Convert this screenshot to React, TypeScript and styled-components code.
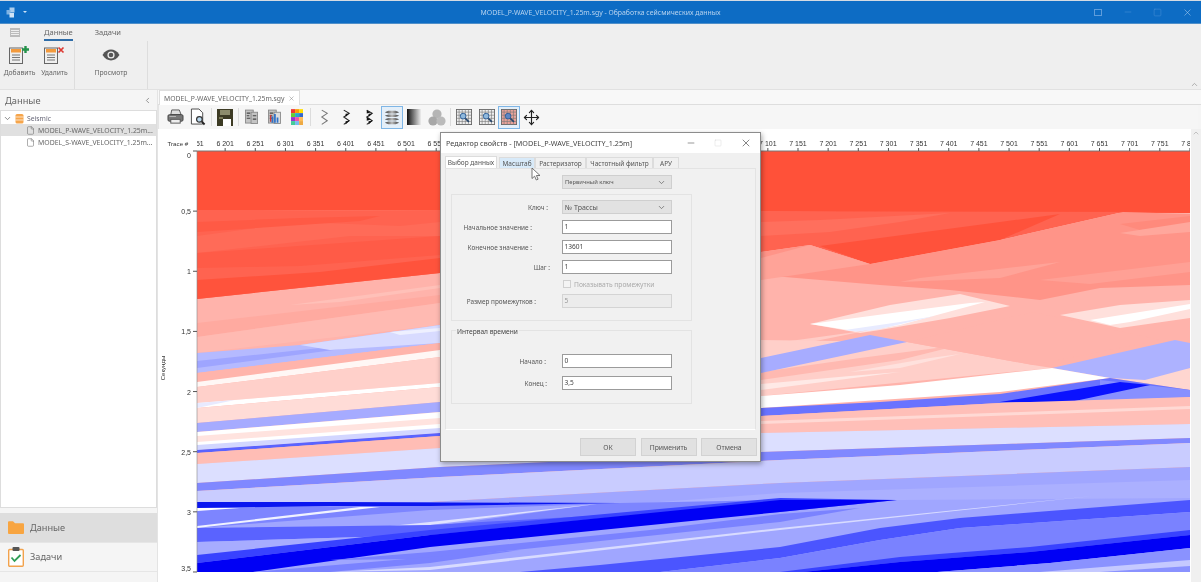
import styled, { createGlobalStyle } from "styled-components";
import { ChevronDown, ChevronLeft, ChevronUp, File, Minus, Move, Square, X } from "lucide-react";

const GlobalStyle = createGlobalStyle`
  html, body { margin: 0; padding: 0; background: #fff; overflow: hidden; }
  * { box-sizing: border-box; }
`;

const STEP_X = 30.15;
const STEP_Y = 60.14;

// painter's order, page coordinates
const layers: [string, string][] = [
  ["#ffb3ab", "197,151 1190,151 1190,572 197,572"],
  ["#ff5139", "197,151 1190,151 1190,213 197,210"],
  ["#ff6350", "197,210 1190,212 1123,212 1000,240 870,264 810,245 761,252 440,273 197,299"],
  ["#ff6b58", "197,236 300,222 400,226 440,222 440,236 350,236 197,253"],
  ["#ff5a45", "197,222 300,218 380,216 360,221 197,232"],
  ["#ff5b47", "197,253 440,236 440,255 300,266 197,268"],
  ["#ff533c", "197,280 320,272 440,258 440,273 197,299"],
  ["#ff6f5d", "761,222 820,220 950,213 900,222 830,232 761,236"],
  ["#ff523b", "820,246 1000,222 1060,214 1000,240 870,264"],
  ["#ff9488", "810,245 870,264 1000,240 1123,212 1190,214 1190,285 1100,288 1040,300 950,290 880,285 761,275 761,252"],
  ["#ff8a7c", "1120,224 1190,216 1190,224 1140,230"],
  ["#ffa79c", "1120,233 1190,222 1190,232 1140,236"],
  ["#ffa398", "920,278 1060,262 1000,278 900,282"],
  ["#ffa398", "761,258 810,245 870,264 761,280"],
  ["#ffa095", "1040,280 1190,262 1190,272 1090,284"],
  ["#ffaaa0", "197,323 440,295 440,303 197,337"],
  ["#ffbab2", "197,337 440,303 440,325 197,353"],
  ["#ffc0b8", "290,305 440,285 440,288 340,302"],
  ["#b5baff", "197,353 300,345 440,325 440,343 197,373"],
  ["#9ea5ff", "197,361 320,348 440,331 440,336 197,368"],
  ["#d8dbff", "300,345 440,325 440,343 330,350"],
  ["#eef0ff", "390,332 440,328 440,331 400,335"],
  ["#ffb4ab", "197,373 440,343 440,350 197,382"],
  ["#fff7f5", "197,382 440,350 440,357 197,387"],
  ["#ffd0ca", "197,387 440,357 440,383 197,403"],
  ["#ffffff", "197,403 440,383 440,387 197,408"],
  ["#e8eaff", "197,403 235,400 197,408"],
  ["#ffdcd7", "197,408 440,387 440,402 197,423"],
  ["#a6abff", "197,423 440,402 440,412 197,432"],
  ["#ffffff", "197,432 440,412 440,433 197,450"],
  ["#ffe3df", "197,436 440,418 440,424 197,442"],
  ["#d2d6ff", "197,445 440,428 440,433 197,450"],
  ["#5a63ff", "197,450 440,433 440,436 197,453"],
  ["#ffbdb5", "197,453 440,436 440,448 197,464"],
  // right half, above the blue layers
  ["#ffe0dc", "810,324 890,305 960,294 1010,306 950,318 880,330 860,333"],
  ["#ffffff", "810,324 900,312 970,303 985,302 900,325 860,332"],
  ["#e8ebff", "845,330 900,322 935,316 880,329 860,332"],
  ["#ffe0dc", "1060,315 1120,305 1190,300 1190,318 1120,328"],
  ["#ffffff", "1090,320 1140,312 1190,304 1190,309 1130,322 1110,325"],
  ["#ffccc6", "761,345 870,330 761,352"],
  ["#ffcfc9", "761,340 907,342 1033,365 1052,368 761,396"],
  ["#ffb9b1", "761,372 860,358 960,345 900,360 761,380"],
  ["#ffe1dd", "850,372 930,358 960,354 900,368"],
  ["#ffe9e6", "761,384 850,376 900,372 761,390"],
  ["#a7acff", "761,358 870,335 907,342 860,352 761,373"],
  ["#ffb3ab", "907,342 1033,312 1160,340 1033,365"],
  ["#ffd6d0", "1110,378 1190,368 1190,390"],
  ["#adb2ff", "1052,368 1175,340 1190,343 1190,368 1145,380 1110,378"],
  ["#ffffff", "761,396 900,385 1052,368 1110,378 1000,392 880,400 761,408"],
  ["#6a73ff", "761,408 880,402 1000,394 1110,378 1190,390 1190,397 1000,403 761,416"],
  ["#8890ff", "1100,380 1190,390 1190,397 1060,403 1100,395"],
  ["#0a12ff", "1000,402 1060,392 1120,382 1150,385 1070,402"],
  ["#ffbfb8", "761,416 1000,403 1190,397 1190,424 761,433"],
  ["#ffd9d4", "761,421 1190,406 1190,409 761,424"],
  // blue layers, full width
  ["#dcdfff", "197,464 440,448 761,433 1190,424 1190,438 761,452 440,467 197,483"],
  ["#8088ff", "197,483 440,467 761,452 1190,438 1190,443 780,460 440,477 197,491"],
  ["#c9ccff", "197,491 440,477 780,460 1190,443 1190,467 780,483 430,502 197,502"],
  ["#a0a6ff", "197,502 430,502 780,483 1190,467 1190,572 197,572"],
  ["#abb0ff", "620,505 780,493 1190,480 1190,498 900,500 780,500"],
  ["#7d85ff", "197,508 620,503 780,500 780,512 430,535 197,527"],
  ["#a0a6ff", "430,510 597,504 430,527 330,533 197,528"],
  ["#ffffff", "197,508 240,508 197,511"],
  ["#f0f2ff", "197,526 360,507 380,507 197,528"],
  ["#e0e2ff", "330,532 430,522 597,504 430,525"],
  ["#5a63ff", "197,528 430,525 780,505 897,500 780,512 430,535 197,542"],
  ["#a7acff", "197,542 430,535 430,547 197,555"],
  ["#3842ff", "197,555 430,530 780,498 897,500 780,501 430,535 197,563"],
  ["#0a16f0", "197,502 330,502 620,503 430,506 330,506 197,508"],
  ["#0000f5", "197,563 430,535 780,500 897,500 780,512 430,547 253,572 197,572"],
  ["#7a82ff", "330,560 430,552 650,530 780,514 860,508 780,522 430,559"],
  ["#d8dbff", "330,572 430,567 780,528 1093,496 780,530 430,570"],
  ["#7a82ff", "253,572 430,557 520,550 430,563 330,572"],
  ["#4b55ff", "520,572 600,565 780,547 880,528 960,518 1190,500 1190,512 960,528 880,540 780,558 660,572"],
  ["#7a82ff", "660,572 780,558 880,540 960,528 1190,512 1190,535 1000,560 937,572"],
  ["#3842ff", "780,572 900,557 1030,547 1190,530 1190,535 1030,552 900,562 803,572"],
  ["#0000f5", "803,572 900,562 1030,552 1190,535 1190,548 1050,563 937,572"],
  ["#8a92ff", "937,572 1050,563 1190,548 1190,572"],
  ["#c5c9ff", "1040,572 1190,560 1190,566 1100,572"],
];

const yLabels = ["0", "0,5", "1", "1,5", "2", "2,5", "3", "3,5"];

function traceLabel(k: number) {
  const n = 6151 + 50 * k;
  return `${Math.floor(n / 1000)} ${String(n % 1000).padStart(3, "0")}`;
}

// ruler labels that the dialog hides are left out
const rulerTicks = Array.from({ length: 34 }, (_, k) => k);

const SeismicChart = () => (
  <ChartSvg viewBox="158 129 1033 453" width={1033} height={453}>
    <defs>
      <clipPath id="rulerClip">
        <rect x="197" y="129" width="993" height="22" />
      </clipPath>
    </defs>
    {layers.map(([fill, points], i) => (
      <polygon key={i} fill={fill} points={points} />
    ))}
    <line x1="197" y1="151" x2="1190" y2="151" stroke="#777" strokeWidth="1" />
    <line x1="197" y1="151" x2="197" y2="572" stroke="#888" strokeWidth="0.6" />
    <TraceText x="167.5" y="146">Trace #</TraceText>
    <g clipPath="url(#rulerClip)">
      {rulerTicks.map((k) => {
        const x = 195 + k * STEP_X;
        const hidden = x > 448 && x < 752;
        return (
          <g key={k}>
            {!hidden && (
              <AxisText x={x} y="145.5" textAnchor="middle">
                {traceLabel(k)}
              </AxisText>
            )}
            <line x1={x} y1="148" x2={x} y2="151" stroke="#555" />
          </g>
        );
      })}
    </g>
    {yLabels.map((label, k) => {
      const y = 151 + k * STEP_Y;
      const textY = k === 0 ? 158 : k === 7 ? 571 : y + 3;
      return (
        <g key={label}>
          <AxisText x="191" y={textY} textAnchor="end">
            {label}
          </AxisText>
          <line x1="193" y1={y} x2="197" y2={y} stroke="#555" />
        </g>
      );
    })}
    <SmallAxisText x="165" y="368" textAnchor="middle" transform="rotate(-90 165 368)">
      Секунды
    </SmallAxisText>
  </ChartSvg>
);

const AppIcon = () => (
  <svg width="11" height="11" viewBox="0 0 11 11">
    <rect x="3.5" y="0.5" width="5" height="5" fill="#a9cdee" />
    <rect x="0.5" y="3" width="4" height="4.5" fill="#7fb3e4" />
    <rect x="3.5" y="6" width="4.5" height="4.5" fill="#cfe3f6" />
  </svg>
);

const DocIcon = ({ mark }: { mark: "add" | "del" }) => (
  <svg width="22" height="18" viewBox="0 0 22 18">
    <rect x="0.5" y="2" width="13" height="15.5" fill="#efefef" stroke="#666" />
    <rect x="2" y="3" width="10" height="3.5" fill="#f39a3c" />
    <path d="M3 9h8M3 11.5h8M3 14h8" stroke="#777" />
    {mark === "add" ? (
      <path d="M16.5 0v7M13 3.5h7" stroke="#24924a" strokeWidth="2.4" />
    ) : (
      <path d="M14.5 1.5l5 5M19.5 1.5l-5 5" stroke="#dd3b34" strokeWidth="1.7" />
    )}
  </svg>
);

const EyeIcon = () => (
  <svg width="18" height="12" viewBox="0 0 18 12">
    <path d="M0.5 6C3 2 6 .6 9 .6S15 2 17.5 6C15 10 12 11.4 9 11.4S3 10 .5 6z" fill="#555" />
    <circle cx="9" cy="6" r="3.6" fill="#eee" />
    <circle cx="9" cy="6" r="2.3" fill="#555" />
  </svg>
);

const PrintIcon = () => (
  <svg width="17" height="16" viewBox="0 0 18 17">
    <path d="M5 1h8l2 5H4z" fill="#ddd" stroke="#555" />
    <rect x="1" y="6" width="16" height="7" rx="1.5" fill="#777" stroke="#444" />
    <rect x="4" y="11" width="10" height="4" fill="#eee" stroke="#555" />
    <path d="M2.5 8h7" stroke="#bbb" />
  </svg>
);

const PreviewIcon = () => (
  <svg width="16" height="18" viewBox="0 0 17 19">
    <path d="M1.5 1h8l4 4v12h-12z" fill="#fff" stroke="#444" />
    <circle cx="10" cy="12" r="3" fill="#bcd9ee" stroke="#333" strokeWidth="1.3" />
    <path d="M12.5 14.5l3 3" stroke="#222" strokeWidth="2" />
  </svg>
);

const SaveIcon = () => (
  <svg width="16" height="17" viewBox="0 0 16 17">
    <rect width="16" height="17" fill="#3d3b24" />
    <rect x="3" y="1" width="10" height="5" fill="#8d8c6c" />
    <rect x="6" y="10" width="8" height="7" fill="#fff" />
    <rect x="2" y="8" width="4" height="2" fill="#7a7958" />
  </svg>
);

const ColumnsIcon = ({ colored }: { colored?: boolean }) => (
  <svg width="13" height="16" viewBox="0 0 15 17">
    <rect x="0.5" y="0.5" width="9" height="15" fill="#c4c4c4" stroke="#888" />
    <rect x="7" y="3" width="7.5" height="13" fill={colored ? "#ddd" : "#c4c4c4"} stroke="#888" />
    <path d="M2 4h4M2 7h3M2 10h4" stroke="#444" strokeWidth="1.3" />
    {colored ? (
      <path d="M5 15V8M8 15V5M11 15V9" stroke="#2f72c9" strokeWidth="2" />
    ) : (
      <path d="M9 7h4M9 11h4" stroke="#444" strokeWidth="1.3" />
    )}
    {colored && <path d="M3 14V6" stroke="#c93a3a" strokeWidth="1.6" />}
  </svg>
);

const PaletteIcon = () => {
  const colors = ["#e33", "#f90", "#fd0", "#6c3", "#2ac", "#36c", "#93c", "#e5a", "#fb5", "#4c9", "#7be", "#ea4"];
  return (
    <svg width="12" height="16" viewBox="0 0 13 17">
      {colors.map((c, i) => (
        <rect key={i} x={(i % 3) * 4.4} y={Math.floor(i / 3) * 4.3} width="4.4" height="4.3" fill={c} />
      ))}
    </svg>
  );
};

const WiggleIcon = ({ weight }: { weight: number }) => (
  <svg width="11" height="17" viewBox="0 0 12 18">
    <path d="M3 1l6 3.5-6 4 6 4-6 4" fill="none" stroke={weight > 1 ? "#222" : "#777"} strokeWidth="1.1" />
    {weight > 1 && <path d="M5 5l4-.5-4 4zM5 13l4-.5-4 4z" fill="#111" />}
    {weight > 2 && <path d="M3 8.5l4 3-4 1zM3 1l4 2.5-4 1z" fill="#111" />}
  </svg>
);

const DensityIcon = () => (
  <svg width="16" height="17" viewBox="0 0 18 17">
    <defs>
      <linearGradient id="densityFade" x1="0" x2="1">
        <stop offset="0" stopColor="#333" />
        <stop offset="0.5" stopColor="#bbb" />
        <stop offset="1" stopColor="#333" />
      </linearGradient>
    </defs>
    {[1, 5, 9, 13].map((y) => (
      <path key={y} d={`M1 ${y + 1.5}l4 -1.5h8l4 1.5l-4 1.5h-8z`} fill="url(#densityFade)" />
    ))}
  </svg>
);

const GradientIcon = () => (
  <svg width="14" height="16" viewBox="0 0 14 16">
    <defs>
      <linearGradient id="blackFade" x1="0" x2="1">
        <stop offset="0" stopColor="#111" />
        <stop offset="1" stopColor="#eee" />
      </linearGradient>
    </defs>
    <rect width="14" height="16" fill="url(#blackFade)" />
  </svg>
);

const CirclesIcon = () => (
  <svg width="18" height="17" viewBox="0 0 18 17">
    <circle cx="9" cy="5" r="4.6" fill="#b5b5b5" />
    <circle cx="5" cy="12" r="4.6" fill="#a8a8a8" />
    <circle cx="13" cy="12" r="4.6" fill="#bbb" />
  </svg>
);

const GridZoomIcon = ({ red }: { red?: boolean }) => (
  <svg width="16" height="16" viewBox="0 0 18 18">
    <rect x="0.5" y="0.5" width="17" height="17" fill={red ? "#e9a29a" : "#eee"} stroke="#666" />
    <path d="M3.5 0v18M7 0v18M10.5 0v18M14 0v18M0 3.5h18M0 7h18M0 10.5h18M0 14h18" stroke="#777" strokeWidth="0.7" />
    <circle cx="8" cy="8" r="3.2" fill={red ? "#5e86c4" : "#8fb8dc"} stroke="#2b5b96" />
    <path d="M10.5 10.5l4 4" stroke="#26456b" strokeWidth="1.8" />
  </svg>
);

const TrayIcon = () => (
  <svg width="9" height="11" viewBox="0 0 9 11">
    <rect x="0.5" y="1" width="8" height="9.5" rx="1.5" fill="#f6a54b" />
    <path d="M0.5 4h8M0.5 7h8" stroke="#fff" strokeWidth="0.7" />
  </svg>
);

const FolderIcon = () => (
  <svg width="16" height="13" viewBox="0 0 16 13">
    <path d="M0 1.2A1 1 0 0 1 1 .2h4l2 2h8a1 1 0 0 1 1 1V12a1 1 0 0 1-1 1H1a1 1 0 0 1-1-1z" fill="#f8a541" />
  </svg>
);

const TaskIcon = () => (
  <svg width="16" height="20" viewBox="0 0 16 20">
    <rect x="0.7" y="2.5" width="14.6" height="16.8" rx="1" fill="#fff" stroke="#f2a24c" strokeWidth="1.4" />
    <rect x="4.5" y="0" width="7" height="4" rx="1" fill="#555" />
    <path d="M3.5 10.5l3 3.5 6-6" fill="none" stroke="#2f9e57" strokeWidth="1.8" />
  </svg>
);

const CursorIcon = () => (
  <svg width="10" height="14" viewBox="0 0 10 14">
    <path d="M1 1v10.5l2.6-2.3 1.7 3.8 1.8-.8-1.7-3.7H9z" fill="#fff" stroke="#555" strokeWidth="0.8" />
  </svg>
);

type RowProps = { label: string; pad: number; value: string };

const FieldRow = ({ label, pad, value }: RowProps) => (
  <FormRow>
    <FieldLabel $pad={pad}>{label}</FieldLabel>
    <TextBox>{value}</TextBox>
  </FormRow>
);

export default function App() {
  return (
    <Root>
      <GlobalStyle />
      <TitleBar>
        <TitleLeft>
          <AppIcon />
          <Caret />
        </TitleLeft>
        <TitleText>MODEL_P-WAVE_VELOCITY_1.25m.sgy - Обработка сейсмических данных</TitleText>
        <WindowButtons>
          <PinBox />
          <Minus size={10} strokeWidth={1} />
          <Square size={9} strokeWidth={1} />
          <CloseWrap>
            <X size={11} strokeWidth={1.2} />
          </CloseWrap>
        </WindowButtons>
      </TitleBar>

      <Ribbon>
        <RibbonTabs>
          <MenuGlyph />
          <RibbonTab $active>Данные</RibbonTab>
          <RibbonTab>Задачи</RibbonTab>
        </RibbonTabs>
        <RibbonBody>
          <RibbonGroup $width={75}>
            <RibbonButton $width={35}>
              <DocIcon mark="add" />
              <span>Добавить</span>
            </RibbonButton>
            <RibbonButton $width={35}>
              <DocIcon mark="del" />
              <span>Удалить</span>
            </RibbonButton>
          </RibbonGroup>
          <RibbonGroup $width={73}>
            <RibbonButton $width={72}>
              <EyeSlot>
                <EyeIcon />
              </EyeSlot>
              <span>Просмотр</span>
            </RibbonButton>
          </RibbonGroup>
          <CollapseSlot>
            <ChevronUp size={9} color="#999" />
          </CollapseSlot>
        </RibbonBody>
      </Ribbon>

      <Workspace>
        <Sidebar>
          <SideHeader>
            <span>Данные</span>
            <ChevronLeft size={9} color="#777" />
          </SideHeader>
          <Tree>
            <TreeRoot>
              <ChevronDown size={9} color="#666" />
              <TrayIcon />
              <span>Seismic</span>
            </TreeRoot>
            <TreeItem $selected>
              <File size={9} strokeWidth={1.4} color="#666" />
              <span>MODEL_P-WAVE_VELOCITY_1.25m...</span>
            </TreeItem>
            <TreeItem>
              <File size={9} strokeWidth={1.4} color="#666" />
              <span>MODEL_S-WAVE_VELOCITY_1.25m...</span>
            </TreeItem>
          </Tree>
          <NavItem $active>
            <NavIcon>
              <FolderIcon />
            </NavIcon>
            Данные
          </NavItem>
          <NavItem>
            <NavIcon>
              <TaskIcon />
            </NavIcon>
            Задачи
          </NavItem>
        </Sidebar>

        <Main>
          <TabStrip>
            <DocTab>
              <span>MODEL_P-WAVE_VELOCITY_1.25m.sgy</span>
              <X size={7} strokeWidth={1.5} color="#777" />
            </DocTab>
          </TabStrip>
          <Toolbar>
            <ToolButton><PrintIcon /></ToolButton>
            <ToolButton><PreviewIcon /></ToolButton>
            <ToolSep />
            <ToolButton><SaveIcon /></ToolButton>
            <ToolSep />
            <ToolButton><ColumnsIcon /></ToolButton>
            <ToolButton><ColumnsIcon colored /></ToolButton>
            <ToolButton><PaletteIcon /></ToolButton>
            <ToolSep />
            <ToolButton><WiggleIcon weight={1} /></ToolButton>
            <ToolButton><WiggleIcon weight={2} /></ToolButton>
            <ToolButton><WiggleIcon weight={3} /></ToolButton>
            <ToolButton $active><DensityIcon /></ToolButton>
            <ToolButton><GradientIcon /></ToolButton>
            <ToolButton><CirclesIcon /></ToolButton>
            <ToolSep />
            <ToolButton><GridZoomIcon /></ToolButton>
            <ToolButton><GridZoomIcon /></ToolButton>
            <ToolButton $active><GridZoomIcon red /></ToolButton>
            <ToolButton><Move size={17} strokeWidth={1.6} color="#222" /></ToolButton>
          </Toolbar>
          <ChartRow>
            <SeismicChart />
            <ScrollTrack>
              <ChevronUp size={8} color="#aaa" />
            </ScrollTrack>
          </ChartRow>
        </Main>
      </Workspace>

      <Dialog>
        <DialogTitle>
          <span>Редактор свойств - [MODEL_P-WAVE_VELOCITY_1.25m]</span>
          <DialogControls>
            <Minus size={10} strokeWidth={1.2} color="#333" />
            <Square size={8} strokeWidth={1} color="#ccc" />
            <X size={12} strokeWidth={1.2} color="#333" />
          </DialogControls>
        </DialogTitle>
        <DialogTabs>
          <DialogTab $active $width={52}>Выбор данных</DialogTab>
          <DialogTab $hover $width={36}>Масштаб</DialogTab>
          <DialogTab $width={51}>Растеризатор</DialogTab>
          <DialogTab $width={67}>Частотный фильтр</DialogTab>
          <DialogTab $width={26}>АРУ</DialogTab>
        </DialogTabs>
        <DialogPanel>
          <KeySelect>
            <KeyText>Первичный ключ</KeyText>
            <ChevronDown size={9} color="#666" />
          </KeySelect>
          <GroupBox $height={127}>
            <FormRow>
              <FieldLabel $pad={14}>Ключ :</FieldLabel>
              <SelectBox>
                <span>№ Трассы</span>
                <ChevronDown size={9} color="#666" />
              </SelectBox>
            </FormRow>
            <FieldRow label="Начальное значение :" pad={30} value="1" />
            <FieldRow label="Конечное значение :" pad={30} value="13601" />
            <FieldRow label="Шаг :" pad={12} value="1" />
            <CheckRow>
              <CheckBox />
              Показывать промежутки
            </CheckRow>
            <FormRow>
              <FieldLabel $pad={26}>Размер промежутков :</FieldLabel>
              <TextBox $disabled>5</TextBox>
            </FormRow>
          </GroupBox>
          <GroupBox $height={74} $spaced>
            <Legend>Интервал времени</Legend>
            <TimeRows>
              <FieldRow label="Начало :" pad={16} value="0" />
              <FieldRow label="Конец :" pad={15} value="3,5" />
            </TimeRows>
          </GroupBox>
        </DialogPanel>
        <DialogFooter>
          <FooterButton>ОК</FooterButton>
          <FooterButton>Применить</FooterButton>
          <FooterButton>Отмена</FooterButton>
        </DialogFooter>
        <CursorSpot>
          <CursorIcon />
        </CursorSpot>
      </Dialog>
    </Root>
  );
}

const Root = styled.div`
  position: relative;
  width: 1201px;
  height: 582px;
  overflow: hidden;
  display: flex;
  flex-direction: column;
  background: #f5f5f5;
  font-family: "Noto Sans", "Open Sans", sans-serif;
  color: #555;
  filter: blur(0.45px);
`;

const TitleBar = styled.div`
  height: 24px;
  flex: none;
  display: grid;
  grid-template-columns: 1fr auto 1fr;
  align-items: center;
  background: #0d6cc4;
  border-top: 1.5px solid #d4dbe3;
  border-bottom: 1px solid #4f8fc9;
`;

const TitleLeft = styled.div`
  display: flex;
  align-items: center;
  gap: 6px;
  padding-left: 6px;
`;

const Caret = styled.span`
  width: 0;
  height: 0;
  border-left: 2px solid transparent;
  border-right: 2px solid transparent;
  border-top: 2px solid #cfe3f6;
`;

const TitleText = styled.div`
  font-size: 6.9px;
  color: #b7d3ef;
  white-space: nowrap;
`;

const WindowButtons = styled.div`
  display: flex;
  align-items: center;
  justify-content: flex-end;
  gap: 20px;
  padding-right: 8px;
  color: #5f9ddb;
`;

const PinBox = styled.span`
  width: 8px;
  height: 7px;
  border: 1px solid #5f9ddb;
  margin-right: 1px;
`;

const CloseWrap = styled.span`
  display: flex;
  color: #a9cdef;
`;

const Ribbon = styled.div`
  height: 66px;
  flex: none;
  background: #efefef;
  border-bottom: 1px solid #e1e1e1;
`;

const RibbonTabs = styled.div`
  height: 17px;
  display: flex;
  align-items: flex-start;
  padding: 3px 0 0 10px;
`;

const MenuGlyph = styled.span`
  width: 10px;
  height: 9px;
  margin: 1px 24px 0 0;
  background: repeating-linear-gradient(#bbb 0 1px, #eee 1px 2px);
  border: 1px solid #bbb;
`;

const RibbonTab = styled.div<{ $active?: boolean }>`
  font-size: 7.5px;
  line-height: 11px;
  height: 14px;
  margin-right: 22px;
  color: #666;
  border-bottom: 2px solid ${(p) => (p.$active ? "#2f6da8" : "transparent")};
`;

const RibbonBody = styled.div`
  height: 48px;
  display: flex;
`;

const RibbonGroup = styled.div<{ $width: number }>`
  width: ${(p) => p.$width}px;
  display: flex;
  justify-content: center;
  padding-top: 5px;
  border-right: 1px solid #ddd;
`;

const RibbonButton = styled.div<{ $width: number }>`
  width: ${(p) => p.$width}px;
  display: flex;
  flex-direction: column;
  align-items: center;
  gap: 4px;
  font-size: 6.8px;
  line-height: 9px;
  color: #666;
  white-space: nowrap;
`;

const EyeSlot = styled.div`
  height: 18px;
  display: flex;
  align-items: center;
`;

const CollapseSlot = styled.div`
  margin-left: auto;
  align-self: flex-end;
  padding: 0 2px 0 0;
  line-height: 0;
`;

const Workspace = styled.div`
  flex: 1;
  min-height: 0;
  display: flex;
`;

const Sidebar = styled.aside`
  width: 158px;
  flex: none;
  display: flex;
  flex-direction: column;
  background: #f5f5f5;
  border-right: 1px solid #e4e4e4;
`;

const SideHeader = styled.div`
  height: 20px;
  flex: none;
  display: flex;
  align-items: center;
  justify-content: space-between;
  padding: 0 5px;
  font-size: 9.3px;
  color: #666;
`;

const Tree = styled.div`
  height: 398px;
  flex: none;
  margin-bottom: 5px;
  padding-top: 1px;
  background: #fff;
  border: 1px solid #ddd;
`;

const TreeRoot = styled.div`
  height: 12px;
  display: flex;
  align-items: center;
  gap: 3px;
  padding-left: 2px;
  font-size: 6.8px;
  color: #667;
`;

const TreeItem = styled.div<{ $selected?: boolean }>`
  height: 12px;
  display: flex;
  align-items: center;
  gap: 3px;
  padding-left: 25px;
  font-size: 6.9px;
  white-space: nowrap;
  color: #666;
  background: ${(p) => (p.$selected ? "#e0e0e0" : "transparent")};
`;

const NavItem = styled.div<{ $active?: boolean }>`
  height: 29.5px;
  flex: none;
  display: flex;
  align-items: center;
  gap: 6px;
  padding-left: 8px;
  font-size: 9.2px;
  color: #666;
  background: ${(p) => (p.$active ? "#dedede" : "#f5f5f5")};
  border-bottom: 1px solid #e6e6e6;
`;

const NavIcon = styled.span`
  width: 16px;
  display: flex;
  justify-content: center;
`;

const Main = styled.main`
  flex: 1;
  min-width: 0;
  display: flex;
  flex-direction: column;
`;

const TabStrip = styled.div`
  height: 15px;
  flex: none;
  display: flex;
  padding-left: 1px;
  background: #f8f8f8;
  border-bottom: 1px solid #dedede;
`;

const DocTab = styled.div`
  width: 141px;
  height: 15px;
  display: flex;
  align-items: center;
  justify-content: space-between;
  padding: 0 4px;
  font-size: 6.8px;
  color: #666;
  white-space: nowrap;
  background: #fff;
  border: 1px solid #dedede;
  border-bottom: none;
`;

const Toolbar = styled.div`
  height: 24px;
  flex: none;
  display: flex;
  align-items: center;
  padding: 0 0 0 5px;
  margin-right: 3px;
  background: #f6f6f6;
  border-left: 1px solid #e4e4e4;
`;

const ToolButton = styled.div<{ $active?: boolean }>`
  width: 22px;
  height: 23px;
  flex: none;
  margin-right: 0.6px;
  display: flex;
  align-items: center;
  justify-content: center;
  background: ${(p) => (p.$active ? "#e4eff9" : "transparent")};
  border: 1px solid ${(p) => (p.$active ? "#7fb6e6" : "transparent")};
`;

const ToolSep = styled.span`
  width: 1px;
  height: 18px;
  flex: none;
  margin: 0 2px 0 1.5px;
  background: #dcdcdc;
`;

const ChartRow = styled.div`
  flex: 1;
  min-height: 0;
  display: flex;
  background: #fff;
`;

const ChartSvg = styled.svg`
  flex: none;
  display: block;
`;

const AxisText = styled.text`
  font-family: "Liberation Sans", Arial, sans-serif;
  font-size: 7px;
  fill: #333;
`;

const TraceText = styled(AxisText)`
  font-size: 6.2px;
`;

const SmallAxisText = styled(AxisText)`
  font-size: 6px;
`;

const ScrollTrack = styled.div`
  flex: 1;
  display: flex;
  justify-content: center;
  background: #f0f0f0;
`;

const Dialog = styled.section`
  position: absolute;
  left: 440px;
  top: 132px;
  width: 321px;
  height: 330px;
  display: flex;
  flex-direction: column;
  background: #f0f0f0;
  border: 1px solid #8c8c8c;
  box-shadow: 1px 2px 5px rgba(0, 0, 0, 0.35);
  font-size: 6.6px;
  color: #555;
`;

const DialogTitle = styled.header`
  height: 20px;
  flex: none;
  display: flex;
  align-items: center;
  justify-content: space-between;
  padding: 0 8px 0 5px;
  background: #fff;
  font-size: 7.2px;
  color: #444;
  white-space: nowrap;
`;

const DialogControls = styled.div`
  display: flex;
  align-items: center;
  gap: 18px;
`;

const DialogTabs = styled.div`
  height: 15px;
  flex: none;
  display: flex;
  align-items: flex-end;
  padding-left: 4px;
`;

const DialogTab = styled.div<{ $active?: boolean; $hover?: boolean; $width: number }>`
  width: ${(p) => p.$width}px;
  height: ${(p) => (p.$active ? 12 : 11)}px;
  display: flex;
  align-items: center;
  justify-content: center;
  margin-right: ${(p) => (p.$active ? 2 : 0)}px;
  white-space: nowrap;
  font-size: 6.5px;
  background: ${(p) => (p.$active ? "#fff" : p.$hover ? "#d8eaf9" : "#f0f0f0")};
  border: 1px solid #dcdcdc;
  border-bottom: none;
`;

const DialogPanel = styled.div`
  height: 262px;
  flex: none;
  margin: 0 4px;
  padding: 6px 63px 0 5px;
  background: #f1f1f1;
  border: 1px solid #e3e3e3;
  border-bottom-color: #fff;
`;

const KeySelect = styled.div`
  width: 110px;
  height: 14px;
  margin-left: 111px;
  display: flex;
  align-items: center;
  justify-content: space-between;
  padding: 0 5px 0 2px;
  background: #e2e2e2;
  border: 1px solid #cfcfcf;
`;

const KeyText = styled.span`
  font-size: 5.8px;
`;

const GroupBox = styled.div<{ $height: number; $spaced?: boolean }>`
  position: relative;
  height: ${(p) => p.$height}px;
  margin-top: ${(p) => (p.$spaced ? 9 : 5)}px;
  padding-top: 5px;
  display: flex;
  flex-direction: column;
  gap: 6px;
  border: 1px solid #e3e3e3;
`;

const FormRow = styled.div`
  height: 14px;
  flex: none;
  display: grid;
  grid-template-columns: 110px 110px;
  align-items: center;
`;

const FieldLabel = styled.label<{ $pad: number }>`
  text-align: right;
  padding-right: ${(p) => p.$pad}px;
  white-space: nowrap;
  font-size: 6.4px;
`;

const TextBox = styled.div<{ $disabled?: boolean }>`
  height: 14px;
  padding: 0 1.5px;
  line-height: 12px;
  font-size: 6.6px;
  color: ${(p) => (p.$disabled ? "#999" : "#444")};
  background: ${(p) => (p.$disabled ? "#ececec" : "#fff")};
  border: 1px solid ${(p) => (p.$disabled ? "#d4d4d4" : "#9b9b9b")};
`;

const SelectBox = styled.div`
  height: 14px;
  display: flex;
  align-items: center;
  justify-content: space-between;
  padding: 0 5px 0 2px;
  font-size: 7px;
  color: #555;
  background: #e2e2e2;
  border: 1px solid #cfcfcf;
`;

const CheckRow = styled.div`
  height: 10px;
  margin-top: -1px;
  margin-bottom: -1px;
  margin-left: 111px;
  display: flex;
  align-items: center;
  gap: 3px;
  font-size: 6.7px;
  color: #aaa;
`;

const CheckBox = styled.span`
  width: 8px;
  height: 8px;
  background: #f4f4f4;
  border: 1px solid #d0d0d0;
`;

const Legend = styled.span`
  position: absolute;
  left: 4px;
  top: -4px;
  padding: 0 1px;
  background: #f1f1f1;
  font-size: 6.6px;
  line-height: 9px;
  color: #444;
`;

const TimeRows = styled.div`
  margin-top: 18px;
  display: flex;
  flex-direction: column;
  gap: 8px;
`;

const DialogFooter = styled.footer`
  flex: 1;
  display: flex;
  justify-content: flex-end;
  align-items: flex-start;
  gap: 4.5px;
  padding: 8px 3px 0 0;
`;

const FooterButton = styled.button`
  width: 56px;
  height: 18px;
  padding: 0;
  font: inherit;
  font-size: 6.8px;
  color: #555;
  background: #e1e1e1;
  border: 1px solid #d2d2d2;
`;

const CursorSpot = styled.span`
  position: absolute;
  left: 90px;
  top: 34px;
  display: flex;
`;
